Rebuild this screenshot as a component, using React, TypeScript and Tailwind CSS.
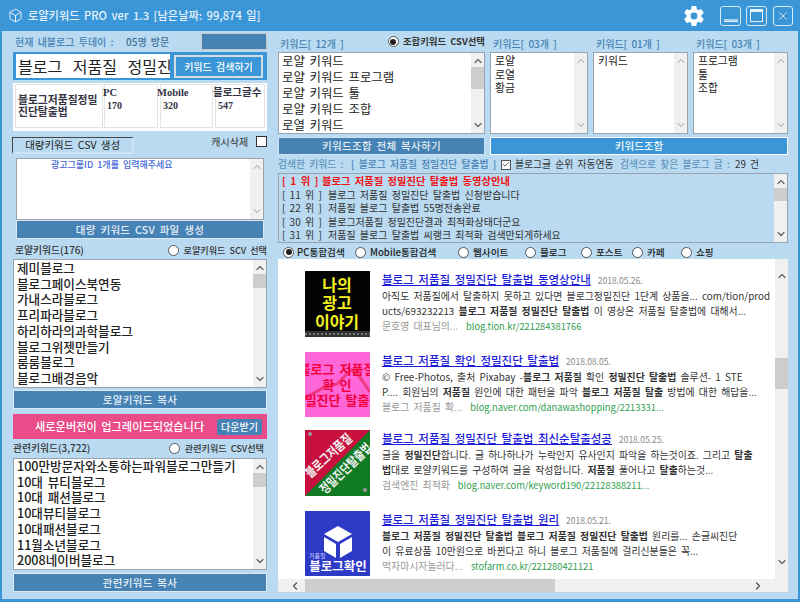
import type { ReactNode } from 'react';
import { Box, Check, ChevronDown, ChevronLeft, ChevronRight, ChevronUp, X } from 'lucide-react';
import { IoSettingsSharp } from 'react-icons/io5';

const font = { fontFamily: '"Noto Sans CJK KR", "Liberation Sans", sans-serif', wordSpacing: '2px' };

function VScroll({ thumbTop, thumbH, dim, inset = 2 }: { thumbTop?: number; thumbH?: number; dim?: boolean; inset?: number }) {
  const cls = dim ? 'text-[#c4c4c4]' : 'text-[#666]';
  return (
    <div className="w-[13px] shrink-0 bg-[#f0f0f0] flex flex-col items-center justify-between relative">
      <ChevronUp size={12} strokeWidth={2.6} className={cls} style={{ marginTop: inset }} />
      {thumbH ? (
        <div className="absolute left-0 w-full bg-[#cdcdcd]" style={{ top: thumbTop, height: thumbH }} />
      ) : null}
      <ChevronDown size={12} strokeWidth={2.6} className={cls} style={{ marginBottom: inset }} />
    </div>
  );
}

function ListBox({ items, className, textClass, thumbTop, thumbH, dim }: {
  items: string[]; className: string; textClass: string; thumbTop?: number; thumbH?: number; dim?: boolean;
}) {
  return (
    <div className={`flex bg-white border border-[#9aa3ad] overflow-hidden ${className}`}>
      <div className={`flex-1 min-w-0 overflow-hidden pl-[3px] whitespace-nowrap ${textClass}`}>
        {items.map((t) => (
          <div key={t}>{t}</div>
        ))}
      </div>
      <VScroll thumbTop={thumbTop} thumbH={thumbH} dim={dim} />
    </div>
  );
}

function Radio({ on }: { on?: boolean }) {
  return (
    <span className="w-[11px] h-[11px] rounded-full border border-[#555] bg-white flex items-center justify-center shrink-0">
      {on ? <span className="w-[6px] h-[6px] rounded-full bg-[#222]" /> : null}
    </span>
  );
}

function Btn({ children, className }: { children: ReactNode; className: string }) {
  return (
    <div className={`flex items-center justify-center bg-[#4682b4] border border-[#dbe9f4] text-[#e4eef6] text-[10.5px] font-medium tracking-[0.3px] ${className}`}>
      {children}
    </div>
  );
}

function Label({ children, className }: { children: ReactNode; className: string }) {
  return <div className={`text-[#4682b4] text-[10px] font-medium whitespace-nowrap ${className}`}>{children}</div>;
}

function Cell({ head, value, className, headLeft }: { head: string; value: string; className: string; headLeft: number }) {
  return (
    <div className={`border border-[#e4e4e4] h-[44px] relative ${className}`}>
      <div className="absolute top-[1px] text-[10.5px] font-bold text-[#334] leading-[14px] whitespace-nowrap" style={{ left: headLeft, fontFamily: '"Liberation Serif", "Noto Sans CJK KR", serif' }}>{head}</div>
      <div className="absolute left-[2px] top-[14px] text-[10px] font-bold text-[#334] leading-[14px]" style={{ fontFamily: '"Liberation Serif", serif' }}>{value}</div>
    </div>
  );
}

function Thumb1() {
  return (
    <svg width="65" height="66" viewBox="0 0 65 66" className="shrink-0">
      <rect width="65" height="66" fill="#040404" />
      <g fill="#f4f01e" fontSize="16" fontWeight="700" textAnchor="middle" fontFamily="Noto Sans CJK KR">
        <text x="32" y="20">나의</text>
        <text x="32" y="38">광고</text>
        <text x="32" y="57">이야기</text>
      </g>
      <rect y="60" width="65" height="6" fill="#333" />
      <line x1="0" y1="63" x2="65" y2="63" stroke="#777" strokeWidth="2" strokeDasharray="2 2" />
    </svg>
  );
}

function Thumb2() {
  return (
    <svg width="65" height="65" viewBox="0 0 65 65" className="shrink-0">
      <rect width="65" height="65" fill="#ff66d8" />
      <path d="M0 46 L18 36 L32 32 L46 18 L54 24 L65 40" fill="none" stroke="#ee3a80" strokeWidth="3" />
      <g fill="#f2003c" fontSize="13" fontWeight="700" textAnchor="middle" fontFamily="Noto Sans CJK KR">
        <text x="32" y="22">블로그 저품질</text>
        <text x="32" y="38">확 인</text>
        <text x="32" y="53">밀진단 탈출</text>
      </g>
    </svg>
  );
}

function Thumb3() {
  return (
    <svg width="65" height="66" viewBox="0 0 65 66" className="shrink-0">
      <rect width="65" height="66" fill="#c8103e" />
      <polygon points="65,0 65,66 0,66" fill="#117a24" />
      <g fill="#f3f3f3" fontWeight="700" textAnchor="middle" fontFamily="Noto Sans CJK KR">
        <text transform="translate(24 26) rotate(-42)" y="4" fontSize="13" textLength="58" lengthAdjust="spacingAndGlyphs">블로그저품질</text>
        <text transform="translate(41 39) rotate(-44)" y="4" fontSize="13" textLength="66" lengthAdjust="spacingAndGlyphs">정밀진단탈출법</text>
      </g>
      <circle cx="5" cy="4" r="2" fill="#999" />
      <circle cx="60" cy="60" r="2" fill="#999" />
    </svg>
  );
}

function Thumb4() {
  return (
    <svg width="65" height="65" viewBox="0 0 65 65" className="shrink-0">
      <rect width="65" height="65" fill="#2d3ac6" />
      <polygon points="33,15 47,23 33,31 19,23" fill="#fff" />
      <polygon points="19,26 31,33 31,47 19,40" fill="#fff" />
      <polygon points="35,33 47,26 47,40 35,47" fill="#fff" />
      <text x="4" y="47" fontSize="6" fill="#cfd4ff" fontFamily="Noto Sans CJK KR">저품질</text>
      <text x="33" y="60" fontSize="12.5" fontWeight="700" fill="#fff" textAnchor="middle" fontFamily="Noto Sans CJK KR">블로그확인</text>
    </svg>
  );
}

function Result({ thumb, title, date, line1, line2, source, url, className }: {
  thumb: ReactNode; title: string; date: string; line1: ReactNode; line2: ReactNode; source: string; url: string; className: string;
}) {
  return (
    <div className={`flex gap-[12px] ${className}`}>
      {thumb}
      <div className="min-w-0 whitespace-nowrap text-[9.9px] text-[#333] leading-[15px]">
        <div className="flex items-baseline gap-[7px] h-[17px] mt-[1px]">
          <span className="text-[11.5px] font-medium text-[#1c1cd8] underline">{title}</span>
          <span className="text-[8.5px] text-[#888]">{date}</span>
        </div>
        <div>{line1}</div>
        <div>{line2}</div>
        <div className="flex items-baseline gap-[8px]">
          <span className="text-[#999]">{source}</span>
          <span className="text-[#2f9e4f] text-[9.3px]">{url}</span>
        </div>
      </div>
    </div>
  );
}

export default function App() {
  return (
    <div className="w-[800px] h-[602px] bg-[#3a96d6] overflow-hidden flex flex-col" style={font}>
      {/* Title bar */}
      <div className="h-[31px] shrink-0 flex items-center pl-[8px] pr-[7px] text-[#e6f1f9]">
        <Box size={15} strokeWidth={1.6} />
        <span className="ml-[5px] text-[11.2px] font-medium whitespace-nowrap">로얄키워드 PRO ver 1.3 [남은날짜: 99,874 일]</span>
        <IoSettingsSharp size={22} className="ml-auto mr-[15px] text-white" />
        <div className="w-[21px] h-[20px] border border-[#d5e8f5] rounded-[3px] flex items-end justify-center pb-[3px] mr-[5px]">
          <span className="w-[14px] h-[3px] bg-[#a9d2ec] border-b border-[#e6f1f9]" />
        </div>
        <div className="w-[21px] h-[20px] border border-[#d5e8f5] rounded-[3px] flex items-center justify-center mr-[6px]">
          <span className="w-[13px] h-[13px] border border-[#e6f1f9] border-t-[3px]" />
        </div>
        <div className="w-[20px] h-[20px] border border-[#d5e8f5] rounded-[3px] flex items-center justify-center">
          <X size={14} strokeWidth={1.4} />
        </div>
      </div>

      {/* Body */}
      <div className="ml-[2px] w-[796px] h-[568px] bg-[#b9daf0] flex pl-[11px] gap-[11px]">
        {/* Left column */}
        <div className="w-[254px] shrink-0 flex flex-col">
          <div className="h-[17px] mt-[2px] flex items-center">
            <Label className="ml-[2px] w-[111px]">현재 내블로그 투데이 :</Label>
            <span className="text-[10px] font-medium text-[#3f6f98] whitespace-nowrap">05명 방문</span>
            <div className="ml-auto w-[66px] h-[17px] bg-[#4682b4] border border-[#c9c9c9]" />
          </div>
          <div className="h-[28px] mt-[2px] bg-[#3a96d6] flex items-center pl-[3px] pr-[4px]">
            <div className="w-[154px] h-[24px] bg-white overflow-hidden whitespace-nowrap text-[16px] leading-[24px] pl-[2px] text-[#222] [word-spacing:7px]">블로그 저품질 정밀진단 탈출법</div>
            <div className="ml-auto w-[89px] h-[23px] bg-[#3a96d6] border-2 border-[#d2dde5] flex items-center justify-center text-white text-[10px] font-medium whitespace-nowrap">키워드 검색하기</div>
          </div>
          <div className="h-[48px] mt-[3px] bg-white flex items-start pl-[2px] gap-[1px] pt-[1px]">
            <div className="w-[88px] h-[44px] border border-[#e4e4e4] pl-[2px] pt-[8px] text-[10.8px] font-bold leading-[12px] text-[#334] whitespace-nowrap">블로그저품질정밀<br />진단탈출법</div>
            <Cell head="PC" value="170" headLeft={-2} className="w-[54px]" />
            <Cell head="Mobile" value="320" headLeft={-4} className="w-[53px] ml-[1px]" />
            <Cell head="블로그글수" value="547" headLeft={-3} className="w-[50px] ml-[1px]" />
          </div>
          <div className="h-[17px] mt-[6px] flex">
            <div className="-ml-[1px] w-[124px] border-t border-l border-[#444] border-b-2 border-r-2 border-b-[#cfe3f2] border-r-[#cfe3f2] flex items-center justify-center text-[10.5px] text-[#222] whitespace-nowrap">대량키워드 CSV 생성</div>
            <span className="ml-[77px] text-[10px] text-[#333] whitespace-nowrap -mt-[3px]">캐시삭제</span>
            <span className="ml-[8px] w-[11px] h-[11px] border border-[#333] bg-white -mt-[1px]" />
          </div>
          <div className="mx-[3px] mt-[4px] h-[62px] bg-white border border-[#9aa3ad] flex">
            <div className="flex-1 pl-[34px] text-[9px] leading-[11px] font-medium text-[#3f66d8] whitespace-nowrap">광고그룹ID 1개를 입력해주세요</div>
            <VScroll dim />
          </div>
          <Btn className="mx-[3px] h-[19px]">대량 키워드 CSV 파일 생성</Btn>
          <div className="h-[20px] flex items-center pt-[3px]">
            <span className="ml-[2px] text-[9.8px] font-medium text-[#333] whitespace-nowrap">로얄키워드(176)</span>
            <span className="ml-auto mr-[5px]"><Radio /></span>
            <span className="text-[9.1px] font-medium text-[#333] whitespace-nowrap">로얄키워드 SCV 선택</span>
          </div>
          <ListBox
            className="h-[129px]"
            textClass="text-[12.6px] font-medium text-[#222] leading-[15.7px]"
            thumbTop={14}
            thumbH={14}
            items={['제미블로그', '블로그페이스북연동', '가내스라블로그', '프리파라블로그', '하리하라의과학블로그', '블로그위젯만들기', '룸룸블로그', '블로그배경음악']}
          />
          <Btn className="h-[19px] mt-[2px]">로얄키워드 복사</Btn>
          <div className="h-[25px] mt-[5px] bg-[#e94c89] flex items-center pl-[22px] pr-[5px]">
            <span className="text-[11.2px] font-medium text-white whitespace-nowrap">새로운버전이 업그레이드되었습니다</span>
            <span className="ml-auto w-[45px] h-[16px] bg-[#4682b4] rounded-[2px] flex items-center justify-center text-[10px] text-white font-medium whitespace-nowrap">다운받기</span>
          </div>
          <div className="h-[19px] flex items-center">
            <span className="text-[9.8px] font-medium text-[#333] whitespace-nowrap">관련키워드(3,722)</span>
            <span className="ml-auto mr-[5px]"><Radio /></span>
            <span className="mr-[3px] text-[9.1px] font-medium text-[#333] whitespace-nowrap">관련키워드 CSV선택</span>
          </div>
          <ListBox
            className="h-[112px]"
            textClass="text-[12.6px] font-medium text-[#222] leading-[15.7px] -mt-[1px]"
            thumbTop={14}
            thumbH={14}
            items={['100만방문자와소통하는파워블로그만들기', '10대 뷰티블로그', '10대 패션블로그', '10대뷰티블로그', '10대패션블로그', '11월소년블로그', '2008네이버블로그']}
          />
          <Btn className="h-[19px] mt-[3px]">관련키워드 복사</Btn>
        </div>

        {/* Right column */}
        <div className="w-[510px] shrink-0 flex flex-col">
          <div className="h-[21px] flex gap-[5px]">
            <div className="w-[207px] flex items-end pb-[1px]">
              <Label className="ml-[2px]">키워드[ 12개 ]</Label>
              <span className="ml-auto mr-[4px] mb-[4px]"><Radio on /></span>
              <span className="text-[9.4px] font-bold text-[#333] whitespace-nowrap mb-[3px]">조합키워드 CSV선택</span>
            </div>
            <div className="w-[98px] flex items-end pb-[1px]"><Label className="ml-[3px]">키워드[ 03개 ]</Label></div>
            <div className="w-[95px] flex items-end pb-[1px]"><Label className="ml-[3px]">키워드[ 01개 ]</Label></div>
            <div className="w-[95px] flex items-end pb-[1px]"><Label className="ml-[3px]">키워드[ 03개 ]</Label></div>
          </div>
          <div className="flex gap-[5px] h-[82px]">
            <ListBox
              className="w-[207px]"
              textClass="text-[12.4px] text-[#222] leading-[16px]"
              thumbTop={14}
              thumbH={22}
              items={['로얄 키워드', '로얄 키워드 프로그램', '로얄 키워드 툴', '로얄 키워드 조합', '로열 키워드']}
            />
            <ListBox className="w-[98px]" dim textClass="text-[10.8px] text-[#222] leading-[13.5px] pt-[1px] pl-[4px]" items={['로얄', '로열', '황금']} />
            <ListBox className="w-[95px]" dim textClass="text-[10.8px] text-[#222] leading-[13.5px] pt-[1px] pl-[4px]" items={['키워드']} />
            <ListBox className="w-[95px]" dim textClass="text-[10.8px] text-[#222] leading-[13.5px] pt-[1px] pl-[4px]" items={['프로그램', '툴', '조합']} />
          </div>
          <div className="flex gap-[5px] h-[18px] mt-[3px]">
            <Btn className="w-[207px] !border-[#cfe3f2]">키워드조합 전체 복사하기</Btn>
            <div className="w-[298px] bg-[#3a96d6] border border-white flex items-center justify-center text-[#eef6fb] text-[10.5px] font-medium">키워드조합</div>
          </div>

          <div className="h-[18px] flex items-center whitespace-nowrap text-[9.8px] pt-[1px]">
            <span className="w-[73px] text-[#5d93bd] font-medium">검색한 키워드 :</span>
            <span className="w-[150px] text-[#4682b4] font-medium">[ 블로그 저품질 정밀진단 탈출법 ]</span>
            <span className="w-[10px] h-[10px] border border-[#555] bg-white flex items-center justify-center"><Check size={9} strokeWidth={2.5} className="text-[#333]" /></span>
            <span className="ml-[4px] w-[105px] text-[#333]">블로그글 순위 자동연동</span>
            <span className="w-[115px] text-[#5d93bd] font-medium">검색으로 찾은 블로그 글 :</span>
            <span className="text-[#333]">29 건</span>
          </div>

          <div className="h-[70px] flex border border-[#9aa3ad] bg-[#b9daf0] overflow-hidden">
            <div className="flex-1 pl-[3px] whitespace-nowrap text-[10px] text-[#333] leading-[13.6px]">
              <div className="flex font-bold text-[#f01414] text-[10.3px]"><span className="w-[40px]">[ 1 위 ]</span>블로그 저품질 정밀진단 탈출법 동영상안내</div>
              <div className="flex"><span className="w-[46px]">[ 11 위 ]</span>블로그 저품질 정밀진단 탈출법 신청받습니다</div>
              <div className="flex"><span className="w-[46px]">[ 22 위 ]</span>저품질 블로그 탈출법 55명전송완료</div>
              <div className="flex"><span className="w-[46px]">[ 30 위 ]</span>블로그저품질 정밀진단결과 최적화상태더군요</div>
              <div className="flex"><span className="w-[46px]">[ 31 위 ]</span>저품질 블로그 탈출법 씨랭크 최적화 검색만되게하세요</div>
            </div>
            <VScroll thumbTop={14} thumbH={13} />
          </div>

          <div className="h-[16px] flex items-center whitespace-nowrap text-[9.6px] font-medium text-[#222] pt-[2px]">
            <span className="ml-[5px] mr-[3px]"><Radio on /></span><span className="w-[50px]">PC통합검색</span>
            <span className="ml-[8px] mr-[4px]"><Radio /></span><span className="w-[68px]">Mobile통합검색</span>
            <span className="ml-[20px] mr-[4px]"><Radio /></span><span className="w-[37px]">웹사이트</span>
            <span className="ml-[15px] mr-[4px]"><Radio /></span><span className="w-[28px]">블로그</span>
            <span className="ml-[13px] mr-[4px]"><Radio /></span><span className="w-[27px]">포스트</span>
            <span className="ml-[9px] mr-[4px]"><Radio /></span><span className="w-[18px]">카페</span>
            <span className="ml-[16px] mr-[4px]"><Radio /></span><span>쇼핑</span>
          </div>

          {/* Web panel */}
          <div className="h-[333px] bg-white flex flex-col">
            <div className="h-[320px] flex overflow-hidden">
              <div className="flex-1 min-w-0 pl-[27px] pt-[12px] overflow-hidden">
                <Result
                  className="h-[81px]"
                  thumb={<Thumb1 />}
                  title="블로그 저품질 정밀진단 탈출법 동영상안내"
                  date="2018.05.26."
                  line1="아직도 저품질에서 탈출하지 못하고 있다면 블로그정밀진단 1단계 상품을... com/tion/prod"
                  line2={<>ucts/693232213 <b>블로그 저품질 정밀진단 탈출법</b> 이 영상은 저품질 탈출법에 대해서...</>}
                  source="문호영 대표님의..."
                  url="blog.tion.kr/221284381766"
                />
                <Result
                  className="h-[78px]"
                  thumb={<Thumb2 />}
                  title="블로그 저품질 확인 정밀진단 탈출법"
                  date="2018.08.05."
                  line1={<>© Free-Photos, 출처 Pixabay -<b>블로그 저품질</b> 확인 <b>정밀진단 탈출법</b> 솔루션- 1 STE</>}
                  line2={<>P.... 회원님의 <b>저품질</b> 원인에 대한 패턴을 파악 <b>블로그 저품질 탈출</b> 방법에 대한 해답을...</>}
                  source="블로그 저품질 확..."
                  url="blog.naver.com/danawashopping/2213331..."
                />
                <Result
                  className="h-[81px]"
                  thumb={<Thumb3 />}
                  title="블로그 저품질 정밀진단 탈출법 최신순탈출성공"
                  date="2018.05.25."
                  line1={<>글을 <b>정밀진단</b>합니다. 글 하나하나가 누락인지 유사인지 파악을 하는것이죠. 그리고 <b>탈출</b></>}
                  line2={<><b>법</b>대로 로얄키워드를 구성하여 글을 작성합니다. <b>저품질</b> 풀어나고 <b>탈출</b>하는것...</>}
                  source="검색엔진 최적화"
                  url="blog.naver.com/keyword190/22128388211..."
                />
                <Result
                  className="h-[66px]"
                  thumb={<Thumb4 />}
                  title="블로그 저품질 정밀진단 탈출법 원리"
                  date="2018.05.21."
                  line1={<><b>블로그 저품질 정밀진단 탈출법 블로그 저품질 정밀진단 탈출법</b> 원리를... 손글씨진단</>}
                  line2="이 유료상품 10만원으로 바뀐다고 하니 블로그 저품질에 걸리신분들은 꼭..."
                  source="먹자마시자놀러다..."
                  url="stofarm.co.kr/221280421121"
                />
              </div>
              <VScroll thumbTop={99} thumbH={31} inset={11} />
            </div>
            <div className="h-[13px] bg-[#f0f0f0] flex items-center justify-between pl-[11px] pr-[24px] relative">
              <ChevronLeft size={12} strokeWidth={2.6} className="text-[#555]" />
              <div className="absolute left-[27px] w-[250px] h-full bg-[#cdcdcd]" />
              <ChevronRight size={12} strokeWidth={2.6} className="text-[#555]" />
            </div>
          </div>
        </div>
      </div>
    </div>
  );
}
